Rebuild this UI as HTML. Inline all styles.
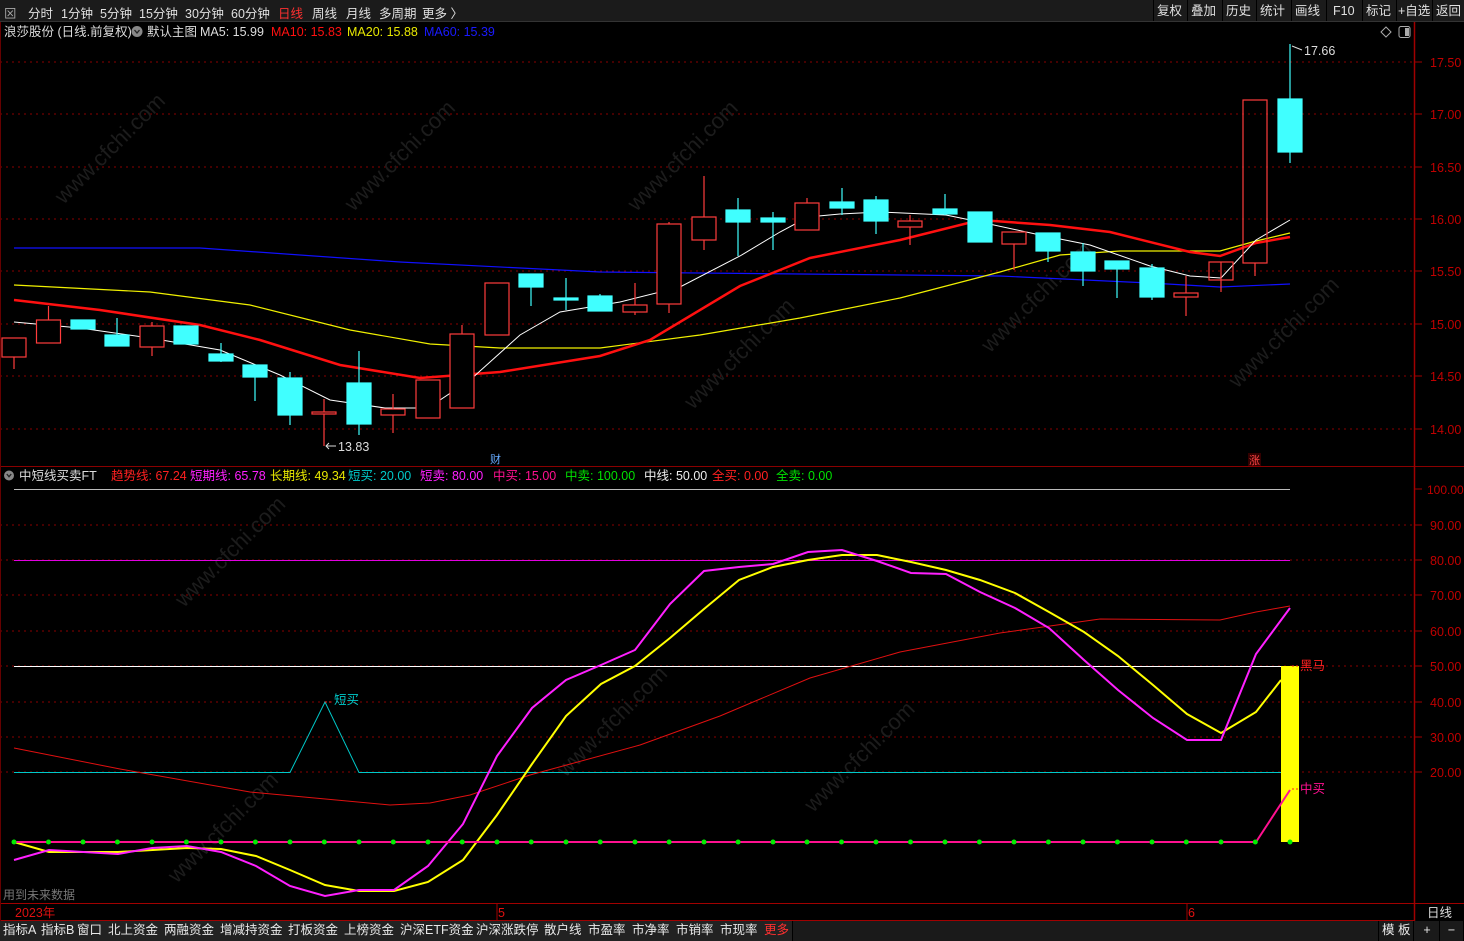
<!DOCTYPE html>
<html><head><meta charset="utf-8"><style>
*{margin:0;padding:0;box-sizing:border-box;white-space:nowrap}
html,body{width:1464px;height:941px;overflow:hidden}
body{background:#000;font-family:"Liberation Sans","Noto Sans CJK SC",sans-serif;font-size:12px;color:#ddd;position:relative}
.top{position:absolute;left:0;top:0;width:1464px;height:22px;background:#1b1b1b;border-bottom:1px solid #333;overflow:hidden}
.top span{position:absolute;top:3px;font-size:12.5px;color:#e0e0e0}
.tr span{position:absolute;top:0;height:22px;line-height:22px;font-size:12.5px;color:#e0e0e0;border-left:1px solid #000;padding:0 3px}
.bot{position:absolute;left:0;top:921px;width:1464px;height:20px;background:#1a1a1a;overflow:hidden}
.bot span{position:absolute;top:0;height:20px;line-height:19px;font-size:12.5px;color:#e8e8e8;background:#222;border-right:1px solid #000;padding:0 3px}
svg{position:absolute;left:0;top:0;display:block}
</style></head><body>
<div class="top">
<span style="left:4px;color:#aaa">⊠</span>
<span style="left:28px">分时</span><span style="left:61px">1分钟</span><span style="left:100px">5分钟</span><span style="left:139px">15分钟</span><span style="left:185px">30分钟</span><span style="left:231px">60分钟</span><span style="left:278px;color:#ff3030">日线</span><span style="left:312px">周线</span><span style="left:346px">月线</span><span style="left:379px">多周期</span><span style="left:422px">更多 〉</span>
<div class="tr"><span style="left:1153px">复权</span><span style="left:1187px">叠加</span><span style="left:1222px">历史</span><span style="left:1256px">统计</span><span style="left:1291px">画线</span><span style="left:1326px;padding:0 6px">F10</span><span style="left:1362px">标记</span><span style="left:1396px;padding:0 1px">+自选</span><span style="left:1432px">返回</span></div>
</div>
<svg width="1464" height="941" viewBox="0 0 1464 941" font-family="Liberation Sans, Noto Sans CJK SC, sans-serif">
<g stroke="#8a0000" stroke-dasharray="2,4" stroke-width="1">
<line x1="0" y1="62" x2="1414" y2="62"/><line x1="0" y1="114" x2="1414" y2="114"/><line x1="0" y1="167" x2="1414" y2="167"/><line x1="0" y1="219" x2="1414" y2="219"/><line x1="0" y1="271" x2="1414" y2="271"/><line x1="0" y1="324" x2="1414" y2="324"/><line x1="0" y1="376" x2="1414" y2="376"/><line x1="0" y1="429" x2="1414" y2="429"/>
<line x1="0" y1="525" x2="1414" y2="525"/><line x1="0" y1="560" x2="1414" y2="560"/><line x1="0" y1="595" x2="1414" y2="595"/><line x1="0" y1="631" x2="1414" y2="631"/><line x1="0" y1="666" x2="1414" y2="666"/><line x1="0" y1="702" x2="1414" y2="702"/><line x1="0" y1="737" x2="1414" y2="737"/><line x1="0" y1="772" x2="1414" y2="772"/>
</g>
<g fill="#1c1c1c" font-size="22" transform="rotate(-45)">
<text x="-100" y="190">www.cfchi.com</text><text x="100" y="400">www.cfchi.com</text><text x="300" y="600">www.cfchi.com</text><text x="200" y="780">www.cfchi.com</text>
<text x="-300" y="560">www.cfchi.com</text><text x="-500" y="750">www.cfchi.com</text><text x="-150" y="950">www.cfchi.com</text><text x="450" y="950">www.cfchi.com</text>
<text x="-600" y="1150">www.cfchi.com</text><text x="0" y="1150">www.cfchi.com</text><text x="600" y="1150">www.cfchi.com</text><text x="-400" y="1350">www.cfchi.com</text>
</g>
<line x1="0" y1="466.5" x2="1464" y2="466.5" stroke="#8a0000"/>
<line x1="1414.5" y1="22" x2="1414.5" y2="921" stroke="#a00000" stroke-width="1.5"/>
<line x1="0" y1="903.5" x2="1464" y2="903.5" stroke="#a00000"/>
<line x1="0" y1="920.5" x2="1414" y2="920.5" stroke="#a00000"/>
<line x1="0.5" y1="22" x2="0.5" y2="921" stroke="#600"/>
<g fill="#c00000" font-size="12.5">
<text x="1430" y="67">17.50</text><text x="1430" y="119">17.00</text><text x="1430" y="172">16.50</text><text x="1430" y="224">16.00</text><text x="1430" y="276">15.50</text><text x="1430" y="329">15.00</text><text x="1430" y="381">14.50</text><text x="1430" y="434">14.00</text>
<text x="1427" y="494" font-size="12">100.00</text><text x="1430" y="530">90.00</text><text x="1430" y="565">80.00</text><text x="1430" y="600">70.00</text><text x="1430" y="636">60.00</text><text x="1430" y="671">50.00</text><text x="1430" y="707">40.00</text><text x="1430" y="742">30.00</text><text x="1430" y="777">20.00</text>
</g>
<g stroke="#a00000"><line x1="1414" y1="62" x2="1422" y2="62"/><line x1="1414" y1="114" x2="1422" y2="114"/><line x1="1414" y1="167" x2="1422" y2="167"/><line x1="1414" y1="219" x2="1422" y2="219"/><line x1="1414" y1="271" x2="1422" y2="271"/><line x1="1414" y1="324" x2="1422" y2="324"/><line x1="1414" y1="376" x2="1422" y2="376"/><line x1="1414" y1="429" x2="1422" y2="429"/>
<line x1="1414" y1="489" x2="1422" y2="489"/><line x1="1414" y1="525" x2="1422" y2="525"/><line x1="1414" y1="560" x2="1422" y2="560"/><line x1="1414" y1="595" x2="1422" y2="595"/><line x1="1414" y1="631" x2="1422" y2="631"/><line x1="1414" y1="666" x2="1422" y2="666"/><line x1="1414" y1="702" x2="1422" y2="702"/><line x1="1414" y1="737" x2="1422" y2="737"/><line x1="1414" y1="772" x2="1422" y2="772"/>
<line x1="497" y1="903" x2="497" y2="921"/><line x1="1187" y1="903" x2="1187" y2="921"/></g>
<polyline fill="none" stroke="#1010ff" stroke-width="1.2" points="14,248 200,248 400,262 600,272 800,274 1000,276 1150,283 1220,287 1290,284"/>
<polyline fill="none" stroke="#f0f000" stroke-width="1.2" points="14,285 150,292 250,305 350,330 430,344 500,348 600,348 700,335 800,318 900,298 1000,272 1060,255 1120,251 1220,251 1256,241 1290,233"/>
<polyline fill="none" stroke="#ff1010" stroke-width="2.5" points="14,300 100,310 200,325 260,340 340,365 420,378 500,372 600,356 650,340 740,286 810,258 900,240 980,220 1050,225 1110,232 1190,252 1220,256 1256,243 1290,237"/>
<polyline fill="none" stroke="#fff" stroke-width="1" points="14,322 80,328 150,338 220,350 280,375 330,400 385,408 428,408 470,380 520,335 560,312 620,302 680,287 740,256 780,232 808,217 840,214 880,212 946,215 980,222 1040,235 1090,245 1150,266 1190,276 1221,278 1256,240 1290,220"/>
<g stroke="#ff3c3c" fill="none" stroke-width="1.2">
<line x1="14" y1="338" x2="14" y2="369"/><rect x="2" y="338" width="24" height="19" fill="#000"/>
<line x1="48.5" y1="306" x2="48.5" y2="343"/><rect x="36.5" y="320" width="24" height="23" fill="#000"/>
<line x1="152" y1="322" x2="152" y2="356"/><rect x="140" y="326" width="24" height="21" fill="#000"/>
<line x1="324" y1="399" x2="324" y2="446"/><rect x="312" y="412" width="24" height="2" fill="#000"/>
<line x1="393" y1="394" x2="393" y2="433"/><rect x="381" y="409" width="24" height="6" fill="#000"/>
<rect x="416" y="380" width="24" height="38" fill="#000"/>
<line x1="462" y1="325" x2="462" y2="408"/><rect x="450" y="334" width="24" height="74" fill="#000"/>
<rect x="485" y="283" width="24" height="52" fill="#000"/>
<line x1="635" y1="283" x2="635" y2="315"/><rect x="623" y="305" width="24" height="7" fill="#000"/>
<line x1="669" y1="222" x2="669" y2="313"/><rect x="657" y="224" width="24" height="80" fill="#000"/>
<line x1="704" y1="176" x2="704" y2="250"/><rect x="692" y="217" width="24" height="23" fill="#000"/>
<line x1="807" y1="198" x2="807" y2="230"/><rect x="795" y="203" width="24" height="27" fill="#000"/>
<line x1="910" y1="215" x2="910" y2="245"/><rect x="898" y="221" width="24" height="6" fill="#000"/>
<line x1="1014" y1="232" x2="1014" y2="270"/><rect x="1002" y="232" width="24" height="12" fill="#000"/>
<line x1="1186" y1="276" x2="1186" y2="316"/><rect x="1174" y="293" width="24" height="4" fill="#000"/>
<line x1="1221" y1="262" x2="1221" y2="292"/><rect x="1209" y="262" width="24" height="18" fill="none"/>
<line x1="1255" y1="263" x2="1255" y2="276"/><rect x="1243" y="100" width="24" height="163" fill="none"/>
</g>
<g stroke="#40ffff" fill="#40ffff" stroke-width="1.2">
<rect x="71" y="320" width="24" height="9"/>
<line x1="117" y1="318" x2="117" y2="346"/><rect x="105" y="335" width="24" height="11"/>
<rect x="174" y="326" width="24" height="18"/>
<line x1="221" y1="343" x2="221" y2="362"/><rect x="209" y="354" width="24" height="7"/>
<line x1="255" y1="365" x2="255" y2="401"/><rect x="243" y="365" width="24" height="12"/>
<line x1="290" y1="372" x2="290" y2="425"/><rect x="278" y="378" width="24" height="37"/>
<line x1="359" y1="351" x2="359" y2="435"/><rect x="347" y="383" width="24" height="41"/>
<line x1="531" y1="274" x2="531" y2="306"/><rect x="519" y="274" width="24" height="13"/>
<line x1="566" y1="278" x2="566" y2="310"/><rect x="554" y="298" width="24" height="2"/>
<line x1="600" y1="294" x2="600" y2="311"/><rect x="588" y="296" width="24" height="15"/>
<line x1="738" y1="198" x2="738" y2="256"/><rect x="726" y="210" width="24" height="12"/>
<line x1="773" y1="212" x2="773" y2="250"/><rect x="761" y="218" width="24" height="4"/>
<line x1="842" y1="188" x2="842" y2="215"/><rect x="830" y="202" width="24" height="6"/>
<line x1="876" y1="196" x2="876" y2="234"/><rect x="864" y="200" width="24" height="21"/>
<line x1="945" y1="194" x2="945" y2="215"/><rect x="933" y="209" width="24" height="5"/>
<rect x="968" y="212" width="24" height="30"/>
<line x1="1048" y1="233" x2="1048" y2="262"/><rect x="1036" y="233" width="24" height="18"/>
<line x1="1083" y1="243" x2="1083" y2="286"/><rect x="1071" y="252" width="24" height="19"/>
<line x1="1117" y1="261" x2="1117" y2="298"/><rect x="1105" y="261" width="24" height="8"/>
<line x1="1152" y1="264" x2="1152" y2="300"/><rect x="1140" y="268" width="24" height="29"/>
<line x1="1290" y1="44" x2="1290" y2="163"/><rect x="1278" y="99" width="24" height="53"/>
</g>
<g fill="#ddd" font-size="12.5"><text x="1304" y="55">17.66</text><text x="338" y="451">13.83</text></g>
<path d="M1292,46 l10,4 M336,446 h-10 m3,-3 l-3,3 l3,3" stroke="#ddd" fill="none"/>
<text x="490" y="463" fill="#6af" font-size="11">财</text>
<rect x="1248" y="453" width="13" height="13" fill="#300"/><text x="1249" y="464" fill="#f44" font-size="11">涨</text>
<line x1="14" y1="489.5" x2="1290" y2="489.5" stroke="#bbb"/>
<line x1="14" y1="560.5" x2="1290" y2="560.5" stroke="#e000e0"/>
<line x1="14" y1="666.5" x2="1290" y2="666.5" stroke="#fff"/>
<polyline fill="none" stroke="#00c8c8" points="14,772.5 290,772.5 325,702 359,772.5 1290,772.5"/>
<polyline fill="none" stroke="#e01010" stroke-width="1" points="14,748 120,769 250,792 390,805 430,803 470,795 530,775 640,745 720,716 810,678 900,652 1000,633 1100,619 1220,620 1256,612 1290,606"/>
<rect x="1281" y="666" width="18" height="176" fill="#ffff00"/>
<polyline fill="none" stroke="#ffff00" stroke-width="2" points="14,842 49,852 118,852 187,848 221,849 256,856 290,870 325,885 359,891 394,891 428,882 463,860 497,815 532,764 566,716 601,684 635,666 670,638 704,609 739,580 773,567 808,560 842,555 877,555 911,562 946,570 980,580 1015,593 1049,612 1084,632 1118,656 1153,685 1187,714 1221,733 1256,712 1281,680"/>
<polyline fill="none" stroke="#ff20ff" stroke-width="2" points="14,860 49,850 118,854 152,848 187,846 221,852 256,866 290,886 325,896 359,890 394,890 428,866 463,824 497,756 532,708 566,680 601,665 635,650 670,604 704,571 739,567 773,564 808,552 842,550 877,561 911,573 946,574 980,592 1015,608 1049,628 1084,660 1118,690 1153,718 1187,740 1221,740 1256,654 1290,608"/>
<polyline fill="none" stroke="#ff1090" stroke-width="2" points="14,842 1256,842 1290,790"/>
<g fill="#00ee00">
<circle cx="14" cy="842" r="2.5"/><circle cx="48.5" cy="842" r="2.5"/><circle cx="83" cy="842" r="2.5"/><circle cx="117.4" cy="842" r="2.5"/><circle cx="152" cy="842" r="2.5"/><circle cx="186.4" cy="842" r="2.5"/><circle cx="221" cy="842" r="2.5"/><circle cx="255.4" cy="842" r="2.5"/><circle cx="290" cy="842" r="2.5"/><circle cx="324.3" cy="842" r="2.5"/><circle cx="359" cy="842" r="2.5"/><circle cx="393.3" cy="842" r="2.5"/><circle cx="428" cy="842" r="2.5"/><circle cx="462.2" cy="842" r="2.5"/><circle cx="497" cy="842" r="2.5"/><circle cx="531.2" cy="842" r="2.5"/><circle cx="566" cy="842" r="2.5"/><circle cx="600.2" cy="842" r="2.5"/><circle cx="635" cy="842" r="2.5"/><circle cx="669.1" cy="842" r="2.5"/><circle cx="704" cy="842" r="2.5"/><circle cx="738.1" cy="842" r="2.5"/><circle cx="773" cy="842" r="2.5"/><circle cx="807" cy="842" r="2.5"/><circle cx="841.5" cy="842" r="2.5"/><circle cx="876" cy="842" r="2.5"/><circle cx="910.5" cy="842" r="2.5"/><circle cx="945" cy="842" r="2.5"/><circle cx="979.4" cy="842" r="2.5"/><circle cx="1014" cy="842" r="2.5"/><circle cx="1048.4" cy="842" r="2.5"/><circle cx="1083" cy="842" r="2.5"/><circle cx="1117.4" cy="842" r="2.5"/><circle cx="1152" cy="842" r="2.5"/><circle cx="1186.3" cy="842" r="2.5"/><circle cx="1221" cy="842" r="2.5"/><circle cx="1255.3" cy="842" r="2.5"/><circle cx="1290" cy="842" r="2.5"/>
</g>
<text x="1300" y="670" fill="#ff2020" font-size="12.5">黑马</text>
<text x="1300" y="793" fill="#ff1090" font-size="12.5">中买</text>
<text x="334" y="704" fill="#00c8c8" font-size="12.5">短买</text>
<path d="M1292,666 h7 M1292,789 h7 M325,702 h8" stroke="#f22" stroke-dasharray="2,2"/>
<text x="3" y="899" fill="#777" font-size="12">用到未来数据</text>
<text x="15" y="917" fill="#e01010" font-size="12.5">2023年</text>
<text x="498" y="917" fill="#e01010" font-size="12.5">5</text>
<text x="1188" y="917" fill="#e01010" font-size="12.5">6</text>
<text x="1427" y="917" fill="#ddd" font-size="12.5">日线</text>
<g font-size="12.5">
<text x="4" y="36" fill="#ddd">浪莎股份 (日线.前复权)</text>
<circle cx="137" cy="31.5" r="5.5" fill="#888"/><path d="M134.5,30 l2.5,3 l2.5,-3" stroke="#222" fill="none" stroke-width="1.3"/>
<text x="147" y="36" fill="#ddd">默认主图</text>
<text x="200" y="36" fill="#ddd">MA5: 15.99</text>
<text x="271" y="36" fill="#ff1010">MA10: 15.83</text>
<text x="347" y="36" fill="#e8e800">MA20: 15.88</text>
<text x="424" y="36" fill="#1a1aff">MA60: 15.39</text>
<circle cx="9" cy="475.5" r="5" fill="#888"/><path d="M6.8,474 l2.2,2.7 l2.2,-2.7" stroke="#222" fill="none" stroke-width="1.3"/>
<text x="19" y="480" fill="#ddd">中短线买卖FT</text>
<text x="111" y="480" fill="#ff2020">趋势线: 67.24</text>
<text x="190" y="480" fill="#ff20ff">短期线: 65.78</text>
<text x="270" y="480" fill="#e8e800">长期线: 49.34</text>
<text x="348" y="480" fill="#00c8c8">短买: 20.00</text>
<text x="420" y="480" fill="#ff20ff">短卖: 80.00</text>
<text x="493" y="480" fill="#ff1090">中买: 15.00</text>
<text x="565" y="480" fill="#00e000">中卖: 100.00</text>
<text x="644" y="480" fill="#eee">中线: 50.00</text>
<text x="712" y="480" fill="#ff2020">全买: 0.00</text>
<text x="776" y="480" fill="#00e000">全卖: 0.00</text>
</g>
<path d="M1381,32 l5,-5 l5,5 l-5,5 z" stroke="#aaa" fill="none"/>
<rect x="1399" y="26.5" width="11" height="11" rx="2" stroke="#aaa" fill="none"/><rect x="1405" y="28" width="4" height="8" fill="#aaa"/>
</svg>
<div class="bot">
<span style="left:0">指标A</span><span style="left:38px">指标B</span><span style="left:74px">窗口</span><span style="left:105px">北上资金</span><span style="left:161px">两融资金</span><span style="left:217px">增减持资金</span><span style="left:285px">打板资金</span><span style="left:341px">上榜资金</span><span style="left:397px">沪深ETF资金</span><span style="left:473px">沪深涨跌停</span><span style="left:541px">散户线</span><span style="left:585px">市盈率</span><span style="left:629px">市净率</span><span style="left:673px">市销率</span><span style="left:717px">市现率</span><span style="left:761px;color:#ff3030">更多</span>
<span style="left:1378px;background:#1a1a1a;border-left:1px solid #000">模 板</span><span style="left:1415px;width:25px;text-align:center;background:#1a1a1a">+</span><span style="left:1440px;width:24px;text-align:center;background:#1a1a1a">−</span>
</div>
</body></html>
